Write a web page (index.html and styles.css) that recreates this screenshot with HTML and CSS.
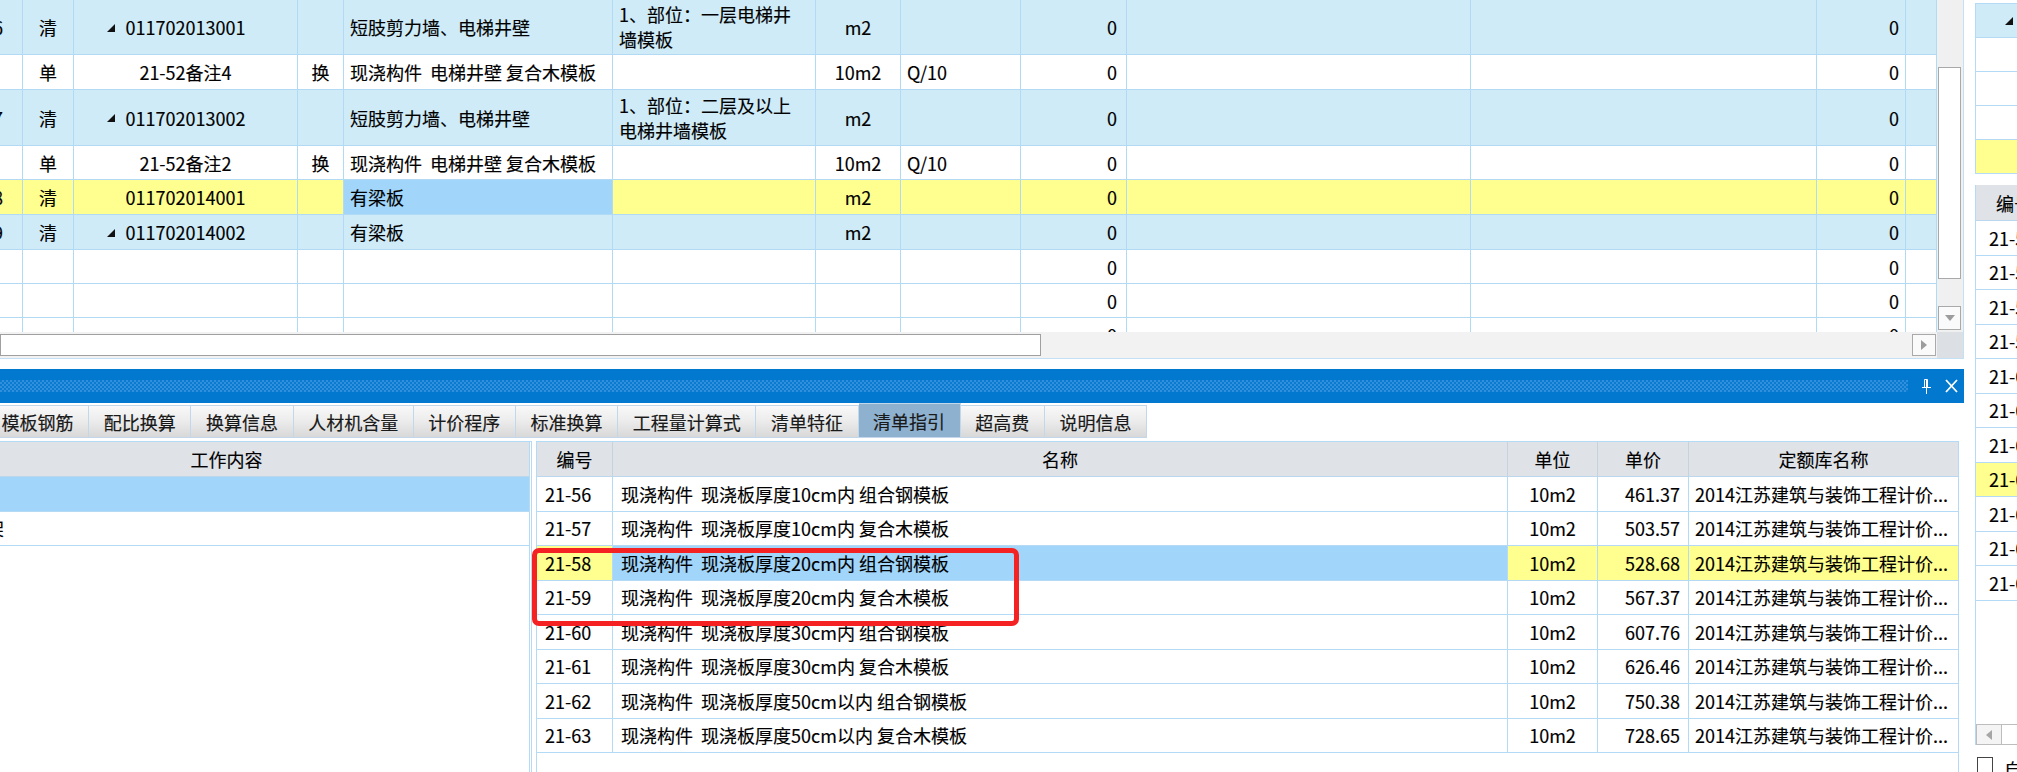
FILE: index.html
```html
<!DOCTYPE html>
<html lang="zh-CN">
<head>
<meta charset="utf-8">
<title>清单指引</title>
<link rel="stylesheet" href="styles.css">
</head>
<body>
<div class="app">
  <div class="main">
    <section class="topsec">
      <div class="gridwrap">
        <div class="grid">
          <div class="row h55 blue">
            <div class="cell num">6</div>
            <div class="cell c">清</div>
            <div class="cell c"><i class="tri"></i>011702013001</div>
            <div class="cell"></div>
            <div class="cell l">短肢剪力墙、电梯井壁</div>
            <div class="cell l"><div class="ml">1、部位：一层电梯井<br>墙模板</div></div>
            <div class="cell c">m2</div>
            <div class="cell"></div>
            <div class="cell r">0</div>
            <div class="cell"></div>
            <div class="cell"></div>
            <div class="cell r r7">0</div>
            <div class="cell"></div>
          </div>
          <div class="row h35">
            <div class="cell num"></div>
            <div class="cell c">单</div>
            <div class="cell c">21-52备注4</div>
            <div class="cell c">换</div>
            <div class="cell l">现浇构件&nbsp; 电梯井壁 复合木模板</div>
            <div class="cell"></div>
            <div class="cell c">10m2</div>
            <div class="cell l">Q/10</div>
            <div class="cell r">0</div>
            <div class="cell"></div>
            <div class="cell"></div>
            <div class="cell r r7">0</div>
            <div class="cell"></div>
          </div>
          <div class="row h56 blue">
            <div class="cell num">7</div>
            <div class="cell c">清</div>
            <div class="cell c"><i class="tri"></i>011702013002</div>
            <div class="cell"></div>
            <div class="cell l">短肢剪力墙、电梯井壁</div>
            <div class="cell l"><div class="ml">1、部位：二层及以上<br>电梯井墙模板</div></div>
            <div class="cell c">m2</div>
            <div class="cell"></div>
            <div class="cell r">0</div>
            <div class="cell"></div>
            <div class="cell"></div>
            <div class="cell r r7">0</div>
            <div class="cell"></div>
          </div>
          <div class="row">
            <div class="cell num"></div>
            <div class="cell c">单</div>
            <div class="cell c">21-52备注2</div>
            <div class="cell c">换</div>
            <div class="cell l">现浇构件&nbsp; 电梯井壁 复合木模板</div>
            <div class="cell"></div>
            <div class="cell c">10m2</div>
            <div class="cell l">Q/10</div>
            <div class="cell r">0</div>
            <div class="cell"></div>
            <div class="cell"></div>
            <div class="cell r r7">0</div>
            <div class="cell"></div>
          </div>
          <div class="row h35 yellow">
            <div class="cell num">8</div>
            <div class="cell c">清</div>
            <div class="cell c">011702014001</div>
            <div class="cell"></div>
            <div class="cell l sel">有梁板</div>
            <div class="cell"></div>
            <div class="cell c">m2</div>
            <div class="cell"></div>
            <div class="cell r">0</div>
            <div class="cell"></div>
            <div class="cell"></div>
            <div class="cell r r7">0</div>
            <div class="cell"></div>
          </div>
          <div class="row h35 blue">
            <div class="cell num">9</div>
            <div class="cell c">清</div>
            <div class="cell c"><i class="tri"></i>011702014002</div>
            <div class="cell"></div>
            <div class="cell l">有梁板</div>
            <div class="cell"></div>
            <div class="cell c">m2</div>
            <div class="cell"></div>
            <div class="cell r">0</div>
            <div class="cell"></div>
            <div class="cell"></div>
            <div class="cell r r7">0</div>
            <div class="cell"></div>
          </div>
          <div class="row">
            <div class="cell num"></div><div class="cell"></div><div class="cell"></div><div class="cell"></div><div class="cell"></div><div class="cell"></div><div class="cell"></div><div class="cell"></div>
            <div class="cell r">0</div><div class="cell"></div><div class="cell"></div><div class="cell r r7">0</div><div class="cell"></div>
          </div>
          <div class="row">
            <div class="cell num"></div><div class="cell"></div><div class="cell"></div><div class="cell"></div><div class="cell"></div><div class="cell"></div><div class="cell"></div><div class="cell"></div>
            <div class="cell r">0</div><div class="cell"></div><div class="cell"></div><div class="cell r r7">0</div><div class="cell"></div>
          </div>
          <div class="row">
            <div class="cell num"></div><div class="cell"></div><div class="cell"></div><div class="cell"></div><div class="cell"></div><div class="cell"></div><div class="cell"></div><div class="cell"></div>
            <div class="cell r">0</div><div class="cell"></div><div class="cell"></div><div class="cell r r7">0</div><div class="cell"></div>
          </div>
        </div>
        <div class="vscroll">
          <div class="vgap1"></div>
          <div class="vthumb"></div>
          <div class="vgap2"></div>
          <div class="vbtn"><i class="arr-down"></i></div>
        </div>
      </div>
      <div class="hscroll">
        <div class="htrack">
          <div class="hthumb"></div>
          <div class="hbtn"><i class="arr-right"></i></div>
        </div>
        <div class="corner"></div>
      </div>
    </section>

    <div class="bluebar">
      <div class="grip"></div>
      <svg class="pin" width="9" height="15" viewBox="0 0 9 15"><path d="M2.5 0.5h3v8h-3z" fill="none" stroke="#fff"/><path d="M5 1v7" stroke="#fff" stroke-width="2"/><path d="M0 8.5h9" stroke="#fff"/><path d="M4.5 9v6" stroke="#fff"/></svg>
      <svg class="close" width="13" height="14" viewBox="0 0 13 14"><path d="M1 1l11 12M12 1L1 13" stroke="#fff" stroke-width="1.8"/></svg>
    </div>

    <nav class="tabs">
      <div class="tab">模板钢筋</div>
      <div class="tab">配比换算</div>
      <div class="tab">换算信息</div>
      <div class="tab">人材机含量</div>
      <div class="tab">计价程序</div>
      <div class="tab">标准换算</div>
      <div class="tab">工程量计算式</div>
      <div class="tab">清单特征</div>
      <div class="tab on">清单指引</div>
      <div class="tab">超高费</div>
      <div class="tab">说明信息</div>
    </nav>

    <div class="panels">
      <div class="pleft">
        <div class="lhead">工作内容</div>
        <div class="lrow lsel"></div>
        <div class="lrow"><span class="cut">架</span></div>
      </div>
      <div class="pright">
        <div class="trow thead">
          <div class="tc c">编号</div>
          <div class="tc c">名称</div>
          <div class="tc c">单位</div>
          <div class="tc c">单价</div>
          <div class="tc c">定额库名称</div>
        </div>
        <div class="trow">
          <div class="tc l8">21-56</div><div class="tc l8">现浇构件&nbsp; 现浇板厚度10cm内 组合钢模板</div><div class="tc c">10m2</div><div class="tc r8">461.37</div><div class="tc l6">2014江苏建筑与装饰工程计价...</div>
        </div>
        <div class="trow">
          <div class="tc l8">21-57</div><div class="tc l8">现浇构件&nbsp; 现浇板厚度10cm内 复合木模板</div><div class="tc c">10m2</div><div class="tc r8">503.57</div><div class="tc l6">2014江苏建筑与装饰工程计价...</div>
        </div>
        <div class="trow tsel">
          <div class="tc l8">21-58</div><div class="tc l8 sel">现浇构件&nbsp; 现浇板厚度20cm内 组合钢模板</div><div class="tc c">10m2</div><div class="tc r8">528.68</div><div class="tc l6">2014江苏建筑与装饰工程计价...</div>
        </div>
        <div class="trow">
          <div class="tc l8">21-59</div><div class="tc l8">现浇构件&nbsp; 现浇板厚度20cm内 复合木模板</div><div class="tc c">10m2</div><div class="tc r8">567.37</div><div class="tc l6">2014江苏建筑与装饰工程计价...</div>
        </div>
        <div class="trow">
          <div class="tc l8">21-60</div><div class="tc l8">现浇构件&nbsp; 现浇板厚度30cm内 组合钢模板</div><div class="tc c">10m2</div><div class="tc r8">607.76</div><div class="tc l6">2014江苏建筑与装饰工程计价...</div>
        </div>
        <div class="trow">
          <div class="tc l8">21-61</div><div class="tc l8">现浇构件&nbsp; 现浇板厚度30cm内 复合木模板</div><div class="tc c">10m2</div><div class="tc r8">626.46</div><div class="tc l6">2014江苏建筑与装饰工程计价...</div>
        </div>
        <div class="trow">
          <div class="tc l8">21-62</div><div class="tc l8">现浇构件&nbsp; 现浇板厚度50cm以内 组合钢模板</div><div class="tc c">10m2</div><div class="tc r8">750.38</div><div class="tc l6">2014江苏建筑与装饰工程计价...</div>
        </div>
        <div class="trow">
          <div class="tc l8">21-63</div><div class="tc l8">现浇构件&nbsp; 现浇板厚度50cm以内 复合木模板</div><div class="tc c">10m2</div><div class="tc r8">728.65</div><div class="tc l6">2014江苏建筑与装饰工程计价...</div>
        </div>
      </div>
      <div class="mark"></div>
    </div>
  </div>

  <aside class="side">
    <div class="stop">
      <div class="srow sblue h35"><i class="tri stri"></i></div>
      <div class="srow"></div>
      <div class="srow h35"></div>
      <div class="srow"></div>
      <div class="srow syellow h35"></div>
    </div>
    <div class="stable">
      <div class="shead">编号</div>
      <div class="sr">21-56</div>
      <div class="sr">21-57</div>
      <div class="sr">21-58</div>
      <div class="sr">21-59</div>
      <div class="sr">21-60</div>
      <div class="sr">21-61</div>
      <div class="sr">21-62</div>
      <div class="sr syellow">21-63</div>
      <div class="sr">21-64</div>
      <div class="sr">21-65</div>
      <div class="sr">21-66</div>
      <div class="sfill"></div>
      <div class="shbar"><div class="sbtn"><i class="arr-left"></i></div><div class="strack"></div></div>
    </div>
    <label class="chk"><span class="box"></span>自动定位</label>
  </aside>
</div>
</body>
</html>
```

FILE: styles.css
```css
* { box-sizing: border-box; margin: 0; padding: 0; }
html, body { width: 2017px; height: 772px; overflow: hidden; background: #fff; }
body {
  font-family: "Noto Sans CJK SC", "Noto Sans", sans-serif;
  font-size: 18px;
  line-height: 24px;
  color: #000;
  -webkit-text-stroke: 0.15px #000;
}
.app { display: flex; width: 2017px; height: 772px; overflow: hidden; }
.main { flex: none; width: 1964px; display: flex; flex-direction: column; }

/* ---------- top grid ---------- */
.topsec {
  flex: none;
  height: 359px;
  border-right: 1px solid #c3e0f5;
  border-bottom: 1px solid #c3e0f5;
  display: flex;
  flex-direction: column;
}
.gridwrap { flex: none; display: flex; height: 332px; overflow: hidden; }
.grid { flex: none; width: 1937px; }
.row {
  display: grid;
  grid-template-columns: 23px 51px 224px 46px 269px 203px 85px 120px 106px 344px 346px 89px 31px;
  height: 34px;
}
.h55 { height: 55px; }
.h56 { height: 56px; }
.h35 { height: 35px; }
.cell {
  border-right: 1px solid #b3daf5;
  border-bottom: 1px solid #b3daf5;
  display: flex;
  align-items: center;
  white-space: nowrap;
  overflow: hidden;
  background: #fff;
}
.blue .cell { background: #cfebf8; }
.yellow .cell { background: #ffff8f; }
.row .cell.sel { background: #a1d5fa; }
.c { justify-content: center; }
.l { padding-left: 6px; }
.r { justify-content: flex-end; padding-right: 9px; }
.r7 { padding-right: 6px; }
.num { justify-content: flex-end; padding-right: 19px; }
.ml { line-height: 25px; white-space: nowrap; }
.tri {
  display: inline-block;
  flex: none;
  width: 0; height: 0;
  border-style: solid;
  border-width: 0 0 8px 8px;
  border-color: transparent transparent #111 transparent;
  margin-left: -19px;
  margin-right: 11px;
  margin-top: 1px;
}

/* vertical scrollbar */
.vscroll { flex: none; width: 26px; background: #f0f0f0; display: flex; flex-direction: column; }
.vgap1 { height: 67px; }
.vthumb { height: 212px; margin: 0 2px 0 1px; border: 1px solid #a9a9a9; background: #fff; }
.vgap2 { height: 27px; }
.vbtn {
  height: 24px; margin: 0 2px 0 1px;
  border: 1px solid #a9a9a9; background: #fafafa;
  display: flex; align-items: center; justify-content: center;
}
.arr-down { width: 0; height: 0; border-style: solid; border-width: 6px 5px 0 5px; border-color: #9c9c9c transparent transparent transparent; }

/* horizontal scrollbar */
.hscroll { flex: none; height: 26px; display: flex; }
.htrack { flex: none; width: 1937px; background: #f2f2f2; display: flex; align-items: center; justify-content: space-between; }
.hthumb { width: 1041px; height: 22px; border: 1px solid #a0a0a0; background: #fff; }
.hbtn {
  width: 24px; height: 22px; margin-right: 1px;
  border: 1px solid #a9a9a9; background: #fafafa;
  display: flex; align-items: center; justify-content: center;
}
.arr-right { width: 0; height: 0; border-style: solid; border-width: 5px 0 5px 6px; border-color: transparent transparent transparent #9c9c9c; }
.corner { flex: 1; background: #dcdfe3; }

/* ---------- blue title bar ---------- */
.bluebar {
  flex: none;
  height: 34px;
  margin-top: 10px;
  background: #0378cf;
  display: flex;
  align-items: center;
  padding-right: 6px;
}
.grip {
  flex: 1;
  height: 12px;
  margin-right: 14px;
  background: repeating-conic-gradient(#3190dc 0 25%, #0a7bd1 0 50%) 0 0 / 4px 4px;
}
.pin { flex: none; margin-right: 14px; }
.close { flex: none; }

/* ---------- tabs ---------- */
.tabs { flex: none; height: 35px; display: flex; align-items: flex-end; margin-left: -14px; }
.tab {
  height: 33px;
  padding: 0 14.6px;
  border: 1px solid #c3d7ea;
  border-left: none;
  background: linear-gradient(#f8f8f8, #ededed 45%, #d8d8d8);
  display: flex;
  align-items: center;
  white-space: nowrap;
  color: #1a1a1a;
}
.tab:first-child { border-left: 1px solid #c3d7ea; }
.tab.on { height: 35px; background: #8eb1d0; }

/* ---------- lower panels ---------- */
.panels { flex: none; height: 331px; margin-top: 3px; display: flex; position: relative; }
.pleft {
  flex: none;
  width: 532px;
  border-top: 1px solid #b5daf5;
  border-right: 3px double #b5daf5;
  display: flex;
  flex-direction: column;
  overflow: hidden;
}
.lhead {
  height: 35px;
  background: #dfe3e8;
  border-bottom: 1px solid #bcd6ec;
  display: flex; align-items: center; justify-content: center;
  padding-right: 76px;
}
.lrow { height: 34.5px; border-bottom: 1px solid #b5daf5; display: flex; align-items: center; }
.lsel { background: #a1d5fa; }
.cut { margin-left: -14px; }

.pright {
  flex: none;
  width: 1423px;
  margin-left: 4px;
  border: 1px solid #b5daf5;
  border-bottom: none;
  display: flex;
  flex-direction: column;
}
.trow {
  display: grid;
  grid-template-columns: 76px 895px 90px 91px 1fr;
  height: 34.5px;
}
.tc {
  border-right: 1px solid #b5daf5;
  border-bottom: 1px solid #b5daf5;
  display: flex; align-items: center;
  white-space: nowrap; overflow: hidden;
}
.tc:last-child { border-right: none; }
.thead { height: 35px; }
.thead .tc { background: #dfe3e8; border-right-color: #c6d2de; border-bottom-color: #bcd6ec; }
.l8 { padding-left: 8px; }
.l6 { padding-left: 6px; }
.r8 { justify-content: flex-end; padding-right: 8px; }
.tsel .tc { background: #ffff8f; }
.tsel .tc.sel { background: #a1d5fa; }

.mark {
  position: absolute;
  left: 532px;
  top: 107px;
  width: 487px;
  height: 78px;
  border: 5px solid #f42222;
  border-radius: 7px;
}

/* ---------- right side panel ---------- */
.side { flex: none; width: 220px; margin-left: 11px; display: flex; flex-direction: column; }
.stop { flex: none; margin-top: 3px; border-top: 1px solid #b5daf5; border-left: 1px solid #b5daf5; }
.srow { height: 34px; border-bottom: 1px solid #b5daf5; display: flex; align-items: center; }
.sblue { background: #cfebf8; }
.syellow { background: #ffff8f; }
.stri { margin-left: 29px; margin-right: 0; }
.stable {
  flex: none;
  height: 560px;
  margin-top: 11px;
  border-left: 1px solid #b5daf5;
  display: flex;
  flex-direction: column;
}
.shead {
  flex: none; height: 36px; background: #dfe3e8;
  border-bottom: 1px solid #bcd6ec;
  display: flex; align-items: center; padding-left: 20px;
}
.sr {
  flex: none; height: 34.5px;
  border-bottom: 1px solid #b5daf5;
  display: flex; align-items: center; padding-left: 13px;
  white-space: nowrap;
}
.sfill { flex: 1; }
.shbar { flex: none; height: 21px; display: flex; background: #f0f0f0; }
.sbtn {
  width: 26px; height: 21px; border: 1px solid #bdbdbd; background: #f4f4f4;
  display: flex; align-items: center; justify-content: center;
}
.arr-left { width: 0; height: 0; border-style: solid; border-width: 5px 6px 5px 0; border-color: transparent #a6a6a6 transparent transparent; }
.strack { flex: 1; border: 1px solid #bdbdbd; border-left: none; background: #fff; }
.chk { display: flex; align-items: flex-start; margin-top: 12px; margin-left: 2px; }
.box { width: 16px; height: 16px; border: 1px solid #444; background: #fff; margin-right: 11px; }
```
